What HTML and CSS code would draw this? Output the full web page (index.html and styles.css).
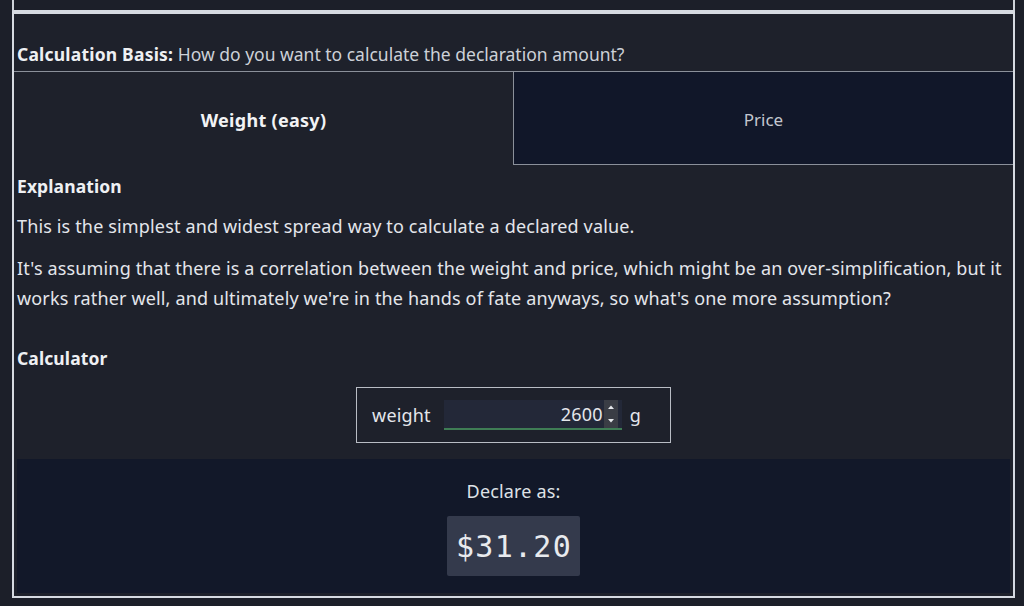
FILE: index.html
```html
<!DOCTYPE html>
<html lang="en">
<head>
<meta charset="utf-8">
<title>Declaration Calculator</title>
<link rel="stylesheet" href="styles.css">
</head>
<body>
<div class="page">
  <div class="prev-box"></div>
  <section class="box">
    <div class="basis"><strong>Calculation Basis:</strong> How do you want to calculate the declaration amount?</div>
    <div class="tabs">
      <div class="tab active">Weight (easy)</div>
      <div class="tab">Price</div>
    </div>
    <div class="content">
      <h3 class="heading first">Explanation</h3>
      <p class="text p1">This is the simplest and widest spread way to calculate a declared value.</p>
      <p class="text p2">It's assuming that there is a correlation between the weight and price, which might be an over-simplification, but it works rather well, and ultimately we're in the hands of fate anyways, so what's one more assumption?</p>
      <h3 class="heading calc-heading">Calculator</h3>
      <div class="calc-wrap">
        <div class="calc">
          <span class="calc-label">weight</span>
          <div class="num">
            <span class="num-value">2600</span>
            <span class="spin">
              <svg width="8" height="22" viewBox="0 0 8 22"><polygon points="1,6 4,2.5 7,6" fill="#e6e8ec"/><polygon points="1,16 4,19.5 7,16" fill="#e6e8ec"/></svg>
            </span>
          </div>
          <span class="unit">g</span>
        </div>
      </div>
      <div class="declare">
        <div class="declare-label">Declare as:</div>
        <div class="amount">$31.20</div>
      </div>
    </div>
  </section>
</div>
</body>
</html>
```

FILE: styles.css
```css
html, body {
  margin: 0;
  padding: 0;
  background: #1c1f29;
}

body {
  font-family: "Noto Sans", "Open Sans", sans-serif;
  font-size: 18px;
  letter-spacing: 0.15px;
  line-height: 30px;
  color: #e4e6eb;
}

.page {
  width: 1003px;
  margin-left: 12px;
}

.prev-box {
  height: 10px;
  border-left: 2px solid #cfd3da;
  border-right: 2px solid #cfd3da;
  border-bottom: 2px solid #d6dae1;
  box-sizing: content-box;
}

.box {
  border: 2px solid #d6dae1;
  background: #1e212b;
  box-shadow: 0 1px 0 #8a8f99;
}

.basis {
  padding: 25px 3px 2px;
  font-size: 17.5px;
  letter-spacing: 0;
  color: #cdd1d8;
}

.basis strong {
  color: #eef0f3;
  font-weight: 700;
  letter-spacing: 0.2px;
}

.tabs {
  display: flex;
  border-top: 1px solid #8b909a;
}

.tab {
  flex: 1;
  height: 93px;
  padding-top: 3px;
  box-sizing: border-box;
  display: flex;
  align-items: center;
  justify-content: center;
  font-size: 17px;
  letter-spacing: 0;
  color: #c3c7cf;
  background: #111729;
  border-left: 1px solid #8b909a;
  border-bottom: 1px solid #8b909a;
}

.tab.active {
  background: #1e212b;
  color: #f2f3f5;
  font-size: 18px;
  letter-spacing: 0.3px;
  font-weight: 700;
  border-left: none;
  border-bottom: 1px solid transparent;
}

.content {
  padding: 0 3px 3px;
}

.heading {
  margin: 0;
  font-size: 17.5px;
  letter-spacing: 0.1px;
  font-weight: 700;
  line-height: 30px;
  color: #eef0f3;
}

.heading.first {
  margin-top: 6px;
}

.text {
  margin: 0;
  color: #e4e6eb;
}

.p1 {
  margin-top: 10px;
}

.p2 {
  margin-top: 12px;
}

.calc-heading {
  margin-top: 30px;
}

.calc-wrap {
  display: flex;
  justify-content: center;
  margin-top: 14px;
}

.calc {
  display: flex;
  align-items: center;
  height: 54px;
  border: 1px solid #b9bdc5;
  padding: 0 29px 0 15px;
}

.calc-label {
  margin-right: 13px;
  color: #e4e6eb;
}

.num {
  width: 178px;
  height: 30px;
  box-sizing: border-box;
  display: flex;
  align-items: center;
  justify-content: flex-end;
  background: #232838;
  border-bottom: 2px solid #3f7d55;
  padding-right: 4px;
}

.num-value {
  color: #e4e6eb;
  margin-right: 1px;
}

.spin {
  width: 14px;
  height: 28px;
  background: #3a3d45;
  display: flex;
  align-items: center;
  justify-content: center;
}

.unit {
  margin-left: 8px;
  color: #e4e6eb;
}

.declare {
  margin-top: 16px;
  background: #121829;
  padding: 17px 0 17px;
  display: flex;
  flex-direction: column;
  align-items: center;
}

.declare-label {
  color: #dfe2e7;
}

.amount {
  margin-top: 10px;
  background: #343a4c;
  border-radius: 2px;
  padding: 1px 8px 0 9px;
  height: 59px;
  line-height: 60px;
  font-family: "DejaVu Sans Mono", "Liberation Mono", monospace;
  font-size: 30px;
  letter-spacing: 1.3px;
  color: #e8eaee;
}
```
